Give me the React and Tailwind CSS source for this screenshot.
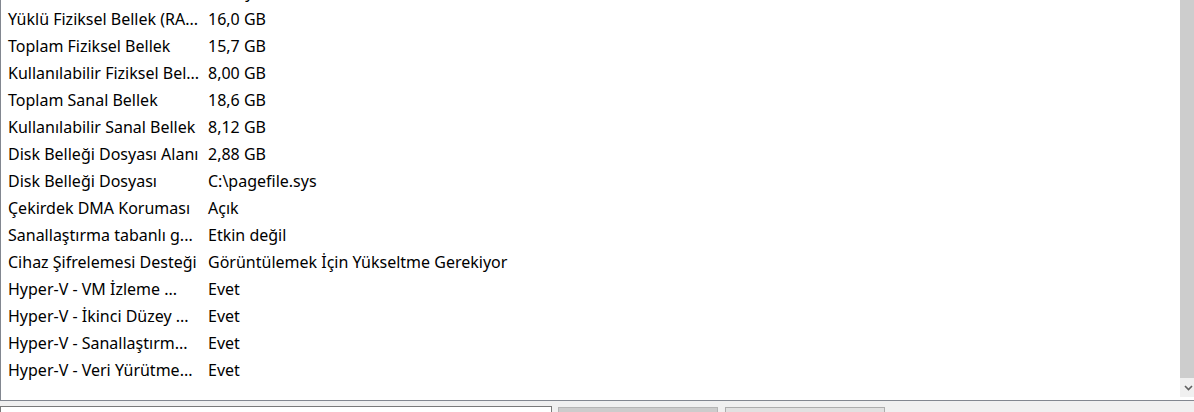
import React from 'react';

const rows = [
  ['Saat Dilimi', 'Türkiye Standart Saati'],
  ['Yüklü Fiziksel Bellek (RA...', '16,0 GB'],
  ['Toplam Fiziksel Bellek', '15,7 GB'],
  ['Kullanılabilir Fiziksel Bel...', '8,00 GB'],
  ['Toplam Sanal Bellek', '18,6 GB'],
  ['Kullanılabilir Sanal Bellek', '8,12 GB'],
  ['Disk Belleği Dosyası Alanı', '2,88 GB'],
  ['Disk Belleği Dosyası', 'C:\\pagefile.sys'],
  ['Çekirdek DMA Koruması', 'Açık'],
  ['Sanallaştırma tabanlı g...', 'Etkin değil'],
  ['Cihaz Şifrelemesi Desteği', 'Görüntülemek İçin Yükseltme Gerekiyor'],
  ['Hyper-V - VM İzleme ...', 'Evet'],
  ['Hyper-V - İkinci Düzey ...', 'Evet'],
  ['Hyper-V - Sanallaştırm...', 'Evet'],
  ['Hyper-V - Veri Yürütme...', 'Evet'],
];

const App = () => {
  return (
    <div
      className="w-[1194px] h-[412px] overflow-hidden bg-[#f0f0f0] flex flex-col"
      style={{ fontFamily: '"Noto Sans", "Open Sans", sans-serif' }}
    >
      {/* list view */}
      <div className="h-[401px] shrink-0 flex border-l border-b border-[#828790] bg-white">
        <div className="w-[1179px] shrink-0 overflow-hidden">
          <div className="-mt-[22px]">
            {rows.map(([label, value]) => (
              <div key={label} className="h-[27px] flex items-center text-[16px] leading-[20px] text-black whitespace-nowrap">
                <div className="w-[207px] shrink-0 pl-[7px] overflow-hidden">{label}</div>
                <div>{value}</div>
              </div>
            ))}
          </div>
        </div>
        {/* scrollbar */}
        <div className="w-[17px] shrink-0 flex flex-col pb-[3px]">
          <div className="flex-1 bg-[#cdcdcd]" />
          <div className="h-[19px] bg-[#f0f0f0] flex items-center justify-center">
            <svg width="9" height="6" viewBox="0 0 9 6" fill="none">
              <path d="M1 1l3.5 3.5L8 1" stroke="#606060" strokeWidth="1.6" />
            </svg>
          </div>
        </div>
      </div>

      {/* find bar */}
      <div className="flex items-start pt-[5px]">
        <div className="w-[552px] h-[22px] shrink-0 border border-[#7a7a7a] bg-white" />
        <button className="ml-[6px] mt-[1px] w-[160px] h-[22px] shrink-0 border border-[#b5b5b5] bg-[#cccccc]" />
        <button className="ml-[7px] mt-[1px] w-[160px] h-[22px] shrink-0 border border-[#adadad] bg-[#e1e1e1]" />
      </div>
    </div>
  );
};

export default App;
